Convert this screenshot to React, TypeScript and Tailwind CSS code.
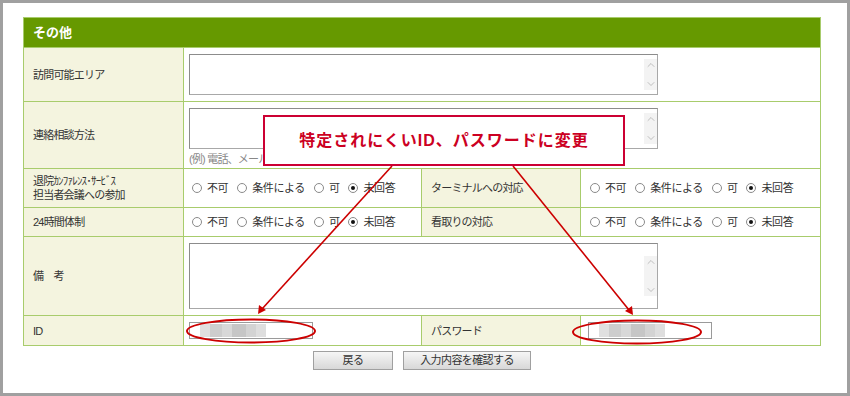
import { ChevronUp, ChevronDown } from 'lucide-react';

const font = "font-['Liberation_Sans','Noto_Sans_CJK_JP',sans-serif]";

// radio choices shown in the two-column rows
const choices = ['不可', '条件による', '可', '未回答'];

// pixelated blur inside the ID / password fields
const mosaic = [
  'w-[10px] bg-[#e0e0e0]',
  'w-[12px] bg-[#cdcdcd]',
  'w-[10px] bg-[#d8d8d8]',
  'w-[14px] bg-[#c6c6c6]',
  'w-[10px] bg-[#d3d3d3]',
  'w-[10px] bg-[#dedede]',
];

function Radios() {
  return (
    <div className="flex items-center text-[11px] tracking-[-0.4px] text-[#333]">
      {choices.map((c) => (
        <span key={c} className="flex items-center mr-[9px]">
          <span className="w-[10px] h-[10px] rounded-full border border-[#8a8a8a] bg-white flex items-center justify-center">
            {c === '未回答' && <span className="w-[4px] h-[4px] rounded-full bg-[#111]" />}
          </span>
          <span className="ml-[5px]">{c}</span>
        </span>
      ))}
    </div>
  );
}

function TextArea({ className }: { className: string }) {
  return (
    <div className={`w-[469px] ${className} border border-[#a8a8a8] border-t-[#8c8c8c] border-l-[#8c8c8c] bg-white flex justify-end`}>
      <div className="w-[13px] h-full bg-[#f3f3f3] flex flex-col items-center justify-between text-[#a8a8a8]">
        <ChevronUp size={12} strokeWidth={1.4} />
        <ChevronDown size={12} strokeWidth={1.4} />
      </div>
    </div>
  );
}

function MaskedInput() {
  return (
    <div className="w-[124px] h-[17px] border border-[#9a9a9a] bg-white flex items-center pl-[10px]">
      <div className="flex h-[13px]">
        {mosaic.map((m, i) => (
          <div key={i} className={`${m} h-full`} />
        ))}
      </div>
    </div>
  );
}

function Label({ children }: { children: React.ReactNode }) {
  return (
    <div className="bg-[#f4f4df] flex items-center pl-[9px] text-[11px] tracking-[-0.8px] text-[#333] leading-[14px]">
      {children}
    </div>
  );
}

export default function App() {
  return (
    <div className={`relative w-[850px] h-[396px] ${font}`}>
      <div className="h-full border-[3px] border-[#a0a0a0] bg-white pt-[14px] pl-[20px]">
        {/* Form table */}
        <div className="w-[798px] grid grid-cols-[159px_237px_158px_239px] gap-px bg-[#a8cc6c] border border-[#a8cc6c]">
          <div className="col-span-4 h-[29px] bg-[#669900] flex items-center pl-[9px] text-white font-bold text-[13px]">
            その他
          </div>

          <Label>訪問可能エリア</Label>
          <div className="col-span-3 h-[53px] bg-white pl-[5px] pt-[6px]">
            <TextArea className="h-[41px] py-[4px]" />
          </div>

          <Label>連絡相談方法</Label>
          <div className="col-span-3 h-[66px] bg-white pl-[5px] pt-[6px]">
            <TextArea className="h-[41px] py-[4px]" />
            <div className="mt-[2px] text-[11px] tracking-[-0.8px] text-[#888]">(例) 電話、メール、FAX など</div>
          </div>

          <Label>
            <div>
              <div>退院ｶﾝﾌｧﾚﾝｽ･ｻｰﾋﾞｽ</div>
              <div>担当者会議への参加</div>
            </div>
          </Label>
          <div className="h-[38px] bg-white flex items-center pl-[8px]">
            <Radios />
          </div>
          <Label>ターミナルへの対応</Label>
          <div className="bg-white flex items-center pl-[9px]">
            <Radios />
          </div>

          <Label>24時間体制</Label>
          <div className="h-[28px] bg-white flex items-center pl-[8px]">
            <Radios />
          </div>
          <Label>看取りの対応</Label>
          <div className="bg-white flex items-center pl-[9px]">
            <Radios />
          </div>

          <Label>備　考</Label>
          <div className="col-span-3 h-[78px] bg-white pl-[5px] pt-[6px]">
            <TextArea className="h-[66px] py-[12px]" />
          </div>

          <Label>ID</Label>
          <div className="h-[29px] bg-white flex items-center pl-[5px]">
            <MaskedInput />
          </div>
          <Label>パスワード</Label>
          <div className="bg-white flex items-center pl-[7px]">
            <MaskedInput />
          </div>
        </div>

        {/* Buttons */}
        <div className="w-[798px] mt-[5px] flex justify-center gap-[10px] text-[11px] tracking-[-0.6px] text-[#333]">
          <button className="w-[80px] h-[19px] border border-[#a0a0a0] bg-gradient-to-b from-[#f6f6f6] to-[#d8d8d8] flex items-center justify-center">
            戻る
          </button>
          <button className="w-[128px] h-[19px] border border-[#a0a0a0] bg-gradient-to-b from-[#f6f6f6] to-[#d8d8d8] flex items-center justify-center">
            入力内容を確認する
          </button>
        </div>
      </div>

      {/* Annotation callout */}
      <div className="absolute left-[263px] top-[115px] w-[362px] h-[51px] border-2 border-[#cc0033] bg-white flex items-center justify-center text-[#cc0022] font-bold text-[16px] tracking-[1px]">
        特定されにくいID、パスワードに変更
      </div>

      <svg className="absolute left-0 top-0 pointer-events-none" width="850" height="396" viewBox="0 0 850 396">
        <line x1="392" y1="166" x2="262" y2="309" stroke="#cc0000" strokeWidth="1.6" />
        <polygon points="258,314 259,305 266,310" fill="#cc0000" />
        <line x1="513" y1="166" x2="629" y2="310" stroke="#cc0000" strokeWidth="1.6" />
        <polygon points="633,315 625,311 632,306" fill="#cc0000" />
        <ellipse cx="251" cy="331" rx="64" ry="11.5" fill="none" stroke="#cc0000" strokeWidth="2" />
        <ellipse cx="637" cy="332" rx="64" ry="11.5" fill="none" stroke="#cc0000" strokeWidth="2" />
      </svg>
    </div>
  );
}
